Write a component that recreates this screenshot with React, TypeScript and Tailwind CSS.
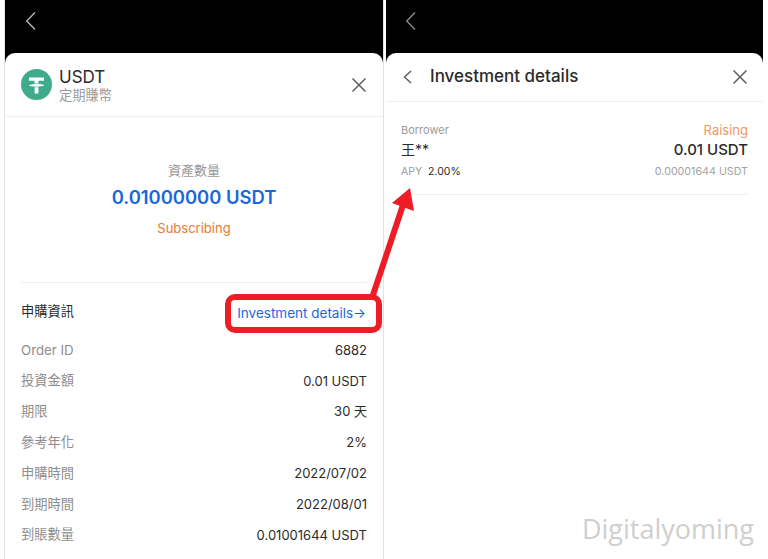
const font = { fontFamily: '"Inter","Noto Sans CJK TC",sans-serif' };

function Back({ light }: { light?: boolean }) {
  return (
    <svg width="12" height="20" viewBox="0 0 12 20" fill="none" stroke={light ? "#8a8a8a" : "#b5b5b5"} strokeWidth="1.4">
      <path d="M10 1.500 1.800 10 10 18.500" />
    </svg>
  );
}

function Close() {
  return (
    <svg width="16" height="16" viewBox="0 0 16 16" fill="none" stroke="#5f5f5f" strokeWidth="1.5">
      <path d="M1.500 1.500 14.500 14.500M14.500 1.500 1.500 14.500" />
    </svg>
  );
}

function Tether() {
  return (
    <svg width="31" height="31" viewBox="0 0 31 31" className="shrink-0">
      <circle cx="15.500" cy="15.500" r="15.500" fill="#3fab8b" />
      <path d="M8 8.500h15v3.200h-5.600v3.100c3.200.2 5.600.8 5.600 1.500s-2.400 1.300-5.600 1.500v6.700h-3.800v-6.700C10.400 17.900 8 17.300 8 16.600s2.400-1.300 5.600-1.500v-3.400H8z" fill="#fff" />
      <ellipse cx="15.500" cy="16.300" rx="9" ry="1.700" fill="none" stroke="#3fab8b" strokeWidth=".6" />
    </svg>
  );
}

const rows = [
  ["Order ID", "6882"],
  ["投資金額", "0.01 USDT"],
  ["期限", "30 天"],
  ["參考年化", "2%"],
  ["申購時間", "2022/07/02"],
  ["到期時間", "2022/08/01"],
  ["到賬數量", "0.01001644 USDT"],
];

export default function App() {
  return (
    <div className="relative w-[768px] h-[559px] overflow-hidden bg-white flex" style={font}>
      <div className="ml-[4px] w-[380px] h-full flex flex-col border-x border-[#e2e2e2]">
        <div className="h-[63px] bg-black pl-[20px] pt-[11px] shrink-0">
          <Back />
        </div>
        <div className="flex-1 bg-white rounded-t-[10px] -mt-[10px] z-10">
          <div className="h-[64px] flex items-center pl-[16px] pr-[16px] border-b border-[#efefef]">
            <Tether />
            <div className="ml-[7px] flex-1 mt-[2px]">
              <div className="text-[17px] leading-[20px] text-[#2b2b2b]">USDT</div>
              <div className="text-[13.250px] leading-[17px] text-[#9b9b9b]">定期賺幣</div>
            </div>
            <Close />
          </div>
          <div className="mx-[16px] h-[166px] border-b border-[#efefef] flex flex-col items-center pt-[44px]">
            <div className="text-[13px] leading-[18px] text-[#9a9a9a]">資產數量</div>
            <div className="mt-[4px] text-[18.400px] leading-[28px] font-semibold text-[#1668dc]">0.01000000 USDT</div>
            <div className="mt-[7px] text-[13px] leading-[20px] text-[#e8792f]">Subscribing</div>
          </div>
          <div className="px-[16px]">
            <div className="h-[57px] pt-[1px] flex items-center justify-between">
              <span className="text-[13.250px] text-[#2b2b2b]">申購資訊</span>
              <span className="text-[13.500px] text-[#1a68e0] pr-[1px] mt-[2px]">Investment details→</span>
            </div>
            <div className="flex flex-col gap-[9.800px]">
              {rows.map(([k, v]) => (
                <div key={k} className="h-[21px] flex items-center justify-between">
                  <span className="text-[13.250px] text-[#8e8e8e]">{k}</span>
                  <span className="text-[13px] text-[#2b2b2b]">{v}</span>
                </div>
              ))}
            </div>
          </div>
        </div>
      </div>

      <div className="ml-[2px] w-[377px] h-full flex flex-col">
        <div className="h-[63px] bg-black pl-[19px] pt-[11px] shrink-0">
          <Back light />
        </div>
        <div className="flex-1 bg-white rounded-t-[10px] -mt-[10px] z-10">
          <div className="h-[49px] flex items-center pl-[16px] pr-[15px] border-b border-[#efefef]">
            <svg width="12" height="14" viewBox="0 0 12 14" fill="none" stroke="#5f5f5f" strokeWidth="1.500">
              <path d="M9 1 2.500 7 9 13" />
            </svg>
            <span className="ml-[16px] flex-1 text-[17px] font-medium text-[#2b2b2b]">Investment details</span>
            <Close />
          </div>
          <div className="mx-[15px] h-[93px] border-b border-[#efefef] flex justify-between pt-[18px]">
            <div className="flex flex-col">
              <span className="text-[11px] leading-[20px] text-[#9a9a9a]">Borrower</span>
              <span className="text-[14px] leading-[20px] text-[#2b2b2b]">王**</span>
              <span className="text-[10.500px] leading-[24px] text-[#9a9a9a]">
                APY<span className="ml-[6px] text-[#2b2b2b]">2.00%</span>
              </span>
            </div>
            <div className="flex flex-col items-end">
              <span className="text-[13px] leading-[20px] text-[#ea9a5f]">Raising</span>
              <span className="text-[15px] leading-[20px] font-medium text-[#2b2b2b]">0.01 USDT</span>
              <span className="text-[10.700px] leading-[24px] text-[#a3a3a3]">0.00001644 USDT</span>
            </div>
          </div>
        </div>
      </div>

      <div className="absolute z-20 left-[225px] top-[294px] w-[157px] h-[39px] border-[6px] border-[#ee1c25] rounded-[10px]" />
      <svg className="absolute z-20 left-0 top-0 pointer-events-none" width="768" height="559" viewBox="0 0 768 559">
        <path d="M373 295 403 205" stroke="#ee1c25" strokeWidth="6" fill="none" />
        <path d="M410 188 392 203 414 211z" fill="#ee1c25" />
      </svg>
      <div className="absolute z-20 right-[14px] top-[512px] text-[27px] leading-[34px] text-[#cfcfcf]" style={{ fontFamily: '"Open Sans",sans-serif' }}>Digitalyoming</div>
    </div>
  );
}
